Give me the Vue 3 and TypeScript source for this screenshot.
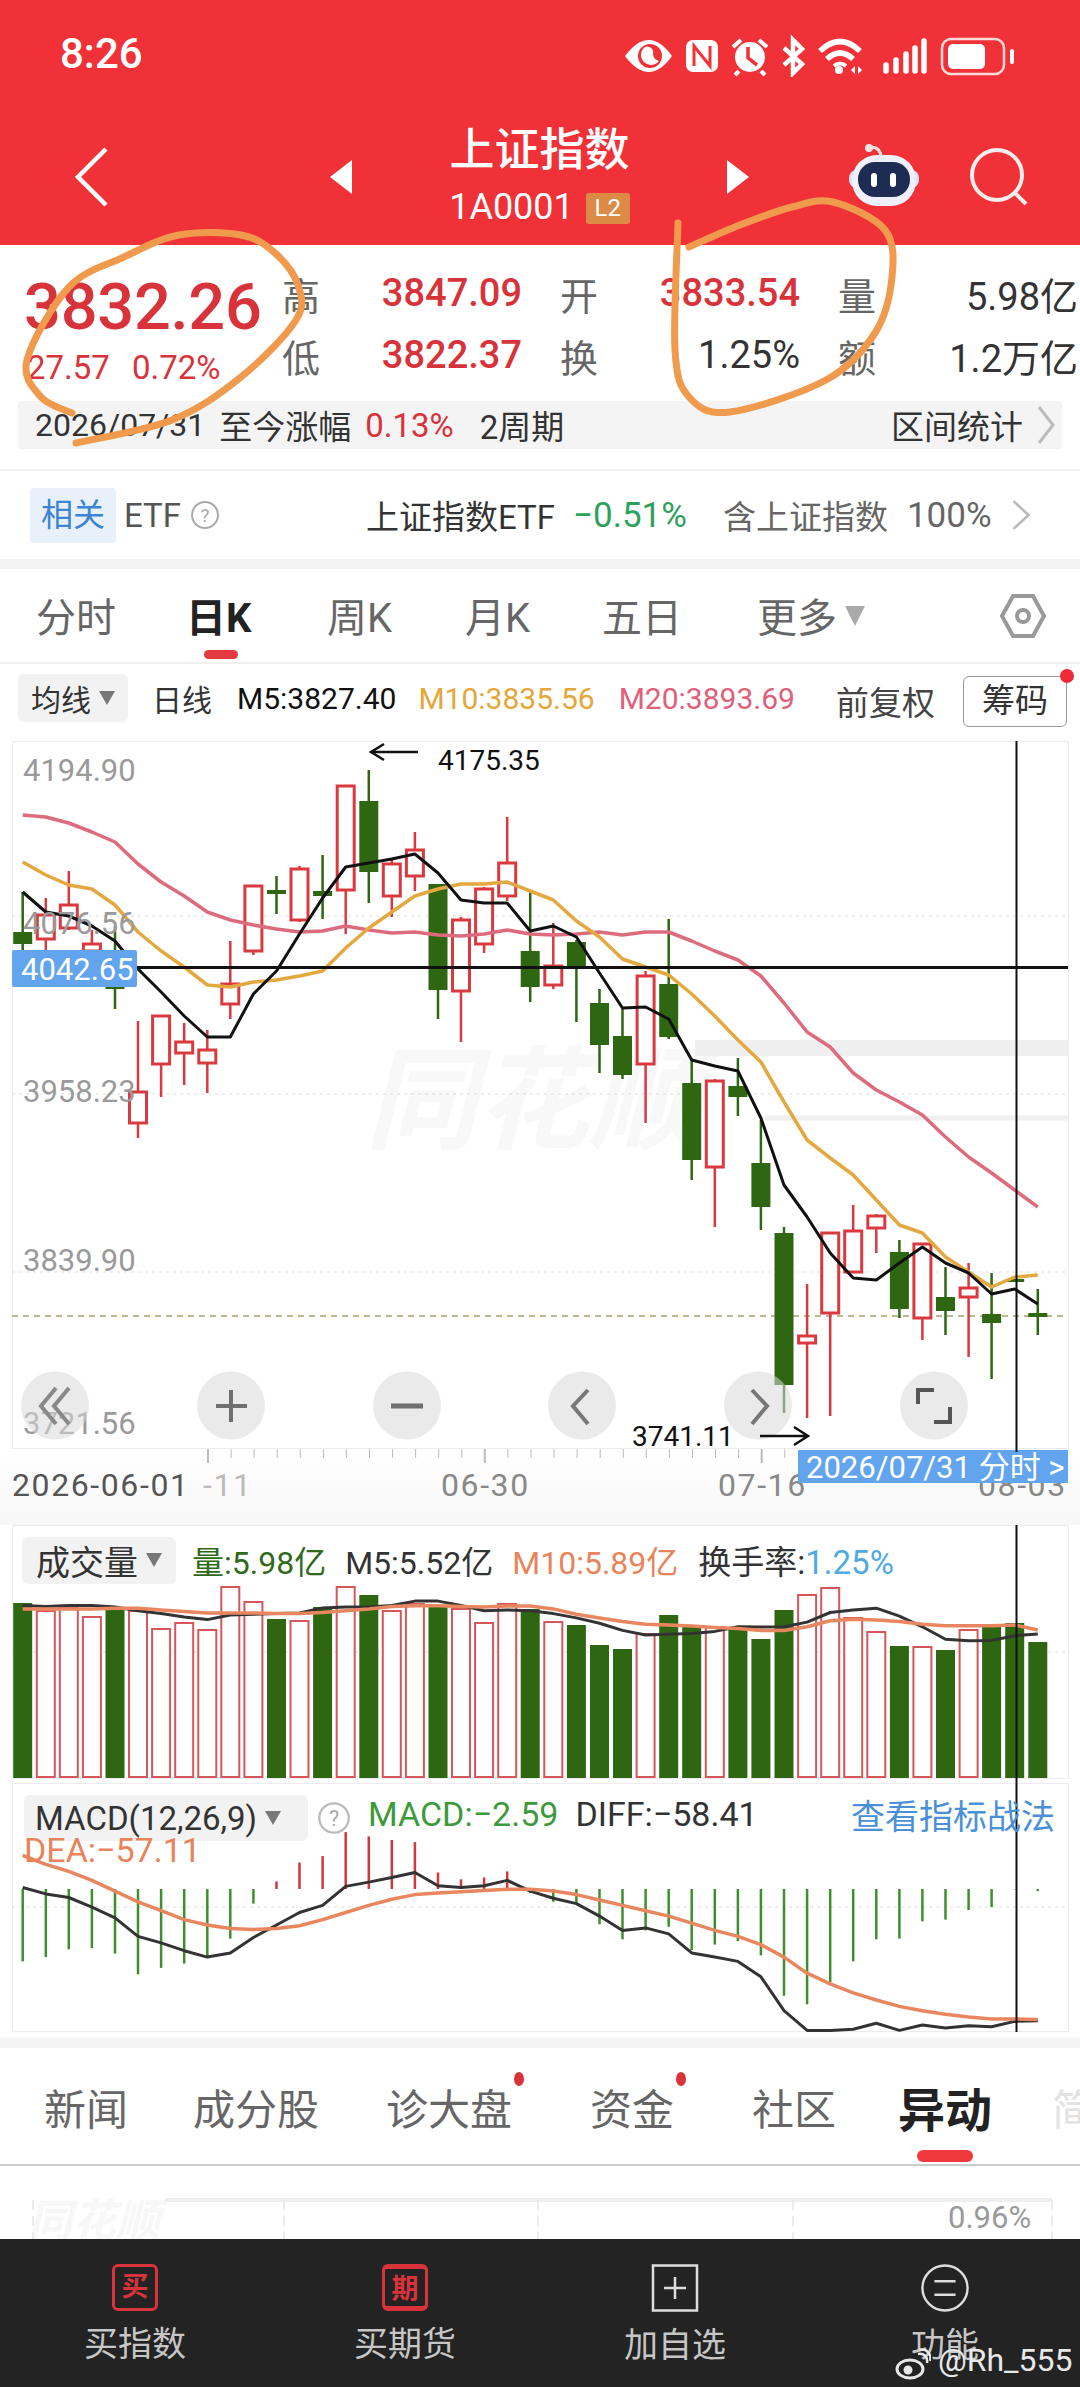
<template>
  <div class="page">
    <!-- 顶部红色区域 -->
    <header class="top">
      <div class="status">
        <span class="time">8:26</span>
        <svg class="status-icons" viewBox="625 30 395 45" fill="none" stroke="#fff" stroke-width="4">
          <path d="M625 54Q649 22 672 54Q649 86 625 54Z" fill="#fff" stroke="none" />
          <circle cx="650" cy="54" r="12" fill="#f03238" stroke="none" />
          <path d="M645 45A10 10 0 1 0 659 59A8 8 0 0 1 653 52A6 6 0 0 0 645 45Z" fill="#fff" stroke="none" />
          <rect x="686" y="38" width="32" height="32" rx="7" fill="#fff" stroke="none" />
          <path d="M694 64V44L710 64V44" stroke="#f03238" stroke-width="3" />
          <circle cx="750" cy="55" r="15" fill="#fff" stroke="none" />
          <path d="M748 45V56L757 63" stroke="#f03238" stroke-width="3.5" />
          <path d="M733 45L741 38M767 45L759 38M739 69L735 73M761 69L765 73" />
          <path d="M784 46L802 62L793 71V38L802 47L784 63" stroke-width="4.5" />
          <path d="M820 49Q840 30 860 49M827 57Q840 45 853 57" stroke-width="5.5" />
          <path d="M834 64Q840 59 846 64" stroke-width="4" />
          <circle cx="839" cy="68" r="4" fill="#fff" stroke="none" />
          <path d="M851 68L855 64V72ZM858 64L862 68L858 72Z" fill="#fff" stroke="none" />
          <path d="M886 69V63M896 69V58M906 69V52M915 69V46M924 69V39" stroke-width="5.5" stroke-linecap="round" />
          <rect x="942" y="37" width="62" height="35" rx="9" stroke="#fbd9d9" stroke-width="2.5" />
          <rect x="948" y="42" width="37" height="25" rx="5" fill="#fff" stroke="none" />
          <path d="M1012 49V60" stroke-width="4" stroke-linecap="round" />
        </svg>
      </div>
      <nav class="nav">
        <svg class="back" viewBox="0 0 34 60" fill="none" stroke="#fff" stroke-width="4.5">
          <path d="M32 2L4 30L32 58" />
        </svg>
        <svg class="arrow arrow-left" viewBox="0 0 22 34"><path d="M22 0V34L0 17Z" fill="#fff" /></svg>
        <div class="title">
          <div class="title-name">上证指数</div>
          <div class="title-code">1A0001<span class="badge">L2</span></div>
        </div>
        <svg class="arrow" viewBox="0 0 22 34"><path d="M0 0V34L22 17Z" fill="#fff" /></svg>
        <svg class="robot" viewBox="0 0 70 62">
          <path d="M20 4C26 2 31 5 32 12" fill="none" stroke="#fbe3e3" stroke-width="3" />
          <circle cx="20" cy="4" r="4" fill="#fbe3e3" />
          <rect x="0" y="26" width="70" height="18" rx="8" fill="#dfe2f7" />
          <rect x="3" y="11" width="64" height="51" rx="25" fill="#eef0fb" />
          <rect x="9" y="18" width="52" height="35" rx="17" fill="#1e2b52" />
          <rect x="22" y="29" width="6" height="14" rx="3" fill="#fff" />
          <rect x="41" y="29" width="6" height="14" rx="3" fill="#fff" />
        </svg>
        <svg class="search" viewBox="0 0 58 58" fill="none" stroke="#fdeeee" stroke-width="4">
          <circle cx="27" cy="27" r="25" />
          <path d="M44 44L56 56" />
        </svg>
      </nav>
    </header>

    <!-- 行情 -->
    <section class="quote">
      <div class="quote-main">
        <div class="quote-left">
          <div class="price">3832.26</div>
          <div class="change"><span>27.57</span><span>0.72%</span></div>
        </div>
        <div class="quote-grid">
          <div v-for="q in quoteCells" :key="q.label" class="cell">
            <span class="cell-label">{{ q.label }}</span>
            <span :class="['cell-value', { up: q.up }]">{{ q.value }}</span>
          </div>
        </div>
      </div>
      <div class="period">
        <span class="period-date">2026/07/31</span>
        <span>至今涨幅</span>
        <span class="up">0.13%</span>
        <span class="period-count">2周期</span>
        <span class="period-stat">区间统计</span>
        <svg class="chev" viewBox="0 0 18 40" fill="none" stroke="#bbb" stroke-width="3"><path d="M2 2L16 20L2 38" /></svg>
      </div>
    </section>

    <section class="etf">
      <span class="etf-tag">相关</span>
      <span class="etf-name">ETF</span>
      <svg class="help" viewBox="0 0 30 30"><circle cx="15" cy="15" r="13" fill="none" stroke="#aaa" stroke-width="2" /><text x="15" y="22" text-anchor="middle" class="help-text">?</text></svg>
      <span class="etf-fund">上证指数ETF</span>
      <span class="etf-pct">−0.51%</span>
      <span class="etf-hold">含上证指数</span>
      <span class="etf-weight">100%</span>
      <svg class="chev etf-chev" viewBox="0 0 18 30" fill="none" stroke="#bbb" stroke-width="2.5"><path d="M2 2L16 15L2 28" /></svg>
    </section>
    <div class="band"></div>

    <section class="tabs">
      <span class="tab">分时</span>
      <span class="tab tab-on">日K</span>
      <span class="tab">周K</span>
      <span class="tab">月K</span>
      <span class="tab">五日</span>
      <span class="tab">更多<i class="tri tri-more"></i></span>
      <svg class="gear" viewBox="0 0 46 44" fill="none" stroke="#999" stroke-width="4">
        <path d="M13 2H33L44 22L33 42H13L2 22Z" />
        <circle cx="23" cy="22" r="6" />
      </svg>
    </section>

    <section class="ma">
      <span class="chip chip-ma">均线<i class="tri"></i></span>
      <span class="ma-day">日线</span>
      <span class="ma-5">M5:3827.40</span>
      <span class="ma-10">M10:3835.56</span>
      <span class="ma-20">M20:3893.69</span>
      <span class="ma-adj">前复权</span>
      <span class="chips-btn">筹码</span>
    </section>

    <!-- K线 -->
    <svg class="chart" viewBox="0 741 1080 708">
      <rect x="12.5" y="741.5" width="1056" height="707" fill="#fff" stroke="#ececec" />
      <text x="365" y="1140" class="mark">同花顺</text>
      <path d="M695 1048H1068" stroke="#efefef" stroke-width="16" />
      <path d="M765 1118H1068" stroke="#f0f0f0" stroke-width="5" />
      <path v-for="g in [916, 1094, 1272]" :key="g" :d="`M12 ${g}H1068`" stroke="#ddd" stroke-dasharray="3 4" />
      <path d="M12 1316H1068" stroke="#a5a26a" stroke-width="1.5" stroke-dasharray="6 5" />

      <g v-for="(c, i) in candles" :key="i">
        <template v-if="c[0] === 'r'">
          <path :d="`M${xAt(i)} ${c[1]}V${c[2]}M${xAt(i)} ${c[3]}V${c[4]}`" stroke="#d93a40" stroke-width="2.5" />
          <rect :x="xAt(i) - 8.5" :y="c[2]" width="17" :height="c[3] - c[2]" fill="#fff" stroke="#d93a40" stroke-width="3" />
        </template>
        <template v-else>
          <path :d="`M${xAt(i)} ${c[1]}V${c[4]}`" stroke="#2e6612" stroke-width="2.5" />
          <rect :x="xAt(i) - 9.5" :y="c[2]" width="19" :height="c[3] - c[2]" fill="#2e6612" />
        </template>
      </g>

      <polyline :points="line(ma20)" class="ln" stroke="#dd6b7e" stroke-width="3.5" />
      <polyline :points="line(ma10)" class="ln" stroke="#e3a83f" stroke-width="3.5" />
      <polyline :points="line(ma5)" class="ln" stroke="#111" stroke-width="3" />
      <text v-for="l in priceLabels" :key="l.t" x="23" :y="l.y" class="axis-price">{{ l.t }}</text>

      <path d="M137 967.5H1068" stroke="#111" stroke-width="3" />
      <rect x="12" y="950" width="125" height="37" rx="2" fill="#62a5ee" />
      <text x="21" y="980" class="axis-cross">4042.65</text>
      <path d="M1016.5 741V1449" stroke="#111" stroke-width="2" />

      <path d="M418 752H372M384 744L371 752L384 760" fill="none" stroke="#111" stroke-width="2.5" />
      <text x="438" y="770" class="note">4175.35</text>

      <g v-for="b in ctrlX" :key="b">
        <circle :cx="b" cy="1405.5" r="34" fill="#d8d8d8" fill-opacity="0.55" />
      </g>
      <g fill="none" stroke="#6f6f6f" stroke-width="4">
        <path d="M56 1388L41 1406L56 1424M69 1388L54 1406L69 1424" stroke="#888" />
        <path d="M231 1390V1422M216 1406H247" />
        <path d="M391 1406H423" stroke-width="5" />
        <path d="M588 1390L573 1406L588 1424" stroke="#777" />
        <path d="M752 1390L767 1406L752 1424" stroke="#777" />
        <path d="M918 1404V1390H934M950 1407V1422H934" stroke="#555" />
      </g>
      <text x="632" y="1446" class="note">3741.11</text>
      <path d="M760 1436H806M794 1427L808 1436L794 1445" fill="none" stroke="#111" stroke-width="2.5" />
    </svg>

    <svg class="axis" viewBox="0 1449 1080 76">
      <rect x="0" y="1449" width="1080" height="76" fill="url(#fade)" />
      <defs>
        <linearGradient id="fade" x1="0" y1="0" x2="0" y2="1">
          <stop offset="0" stop-color="#fff" />
          <stop offset="1" stop-color="#f7f7f7" />
        </linearGradient>
      </defs>
      <path v-for="(t, i) in ticks" :key="i" :d="`M${t.x} 1449V${t.major ? 1463 : 1458}`" stroke="#bbb" :stroke-width="t.major ? 2 : 1" />
      <text x="12" y="1496" class="date">2026-06-01</text>
      <text x="203" y="1496" class="date date-dim">-11</text>
      <text x="441" y="1496" class="date date-mid">06-30</text>
      <text x="718" y="1496" class="date date-mid">07-16</text>
      <text x="978" y="1496" class="date date-mid">08-03</text>
      <rect x="798" y="1450" width="270" height="33" fill="#62a5ee" />
      <text x="806" y="1478" class="tag">2026/07/31 分时 &gt;</text>
      <path d="M1016.5 1449V1452" stroke="#111" stroke-width="2" />
    </svg>

    <!-- 成交量 -->
    <section class="panel vol">
      <div class="panel-head">
        <span class="chip chip-vol">成交量<i class="tri"></i></span>
        <span class="v-amt">量:5.98亿</span>
        <span class="v-m5">M5:5.52亿</span>
        <span class="v-m10">M10:5.89亿</span>
        <span class="v-rate">换手率:<b>1.25%</b></span>
      </div>
      <svg class="panel-svg" viewBox="0 1525 1080 258">
        <rect x="12.5" y="1525.5" width="1056" height="253" fill="none" stroke="#ececec" />
        <path d="M12 1652H1068" stroke="#ddd" stroke-dasharray="3 4" />
        <template v-for="(h, i) in volTops" :key="i">
          <rect v-if="candles[i][0] === 'r'" :x="xAt(i) - 9" :y="h" width="18" :height="1777 - h" fill="#fff" stroke="#d5565b" stroke-width="2" />
          <rect v-else :x="xAt(i) - 9.5" :y="h" width="19" :height="1778 - h" fill="#2e6612" />
        </template>
        <polyline :points="line(volM5)" class="ln" stroke="#333" stroke-width="3" />
        <polyline :points="line(volM10)" class="ln" stroke="#e8875f" stroke-width="3.5" />
        <path d="M1016.5 1525V1783" stroke="#111" stroke-width="2" />
      </svg>
    </section>

    <!-- MACD -->
    <section class="panel macd">
      <div class="panel-head macd-head">
        <span class="chip chip-macd">MACD(12,26,9)<i class="tri"></i></span>
        <svg class="help help-macd" viewBox="0 0 30 30"><circle cx="15" cy="15" r="13" fill="none" stroke="#bbb" stroke-width="2" /><text x="15" y="22" text-anchor="middle" class="help-text">?</text></svg>
        <span class="m-macd">MACD:−2.59</span>
        <span class="m-diff">DIFF:−58.41</span>
        <span class="m-link">查看指标战法</span>
      </div>
      <div class="m-dea">DEA:−57.11</div>
      <svg class="panel-svg" viewBox="0 1783 1080 255">
        <rect x="12.5" y="1783.5" width="1056" height="248" fill="none" stroke="#ececec" />
        <path d="M12 1907H1068" stroke="#ddd" stroke-dasharray="3 4" />
        <path v-for="(b, i) in macdBars" :key="i" :d="`M${xAt(i)} 1889V${b}`" :stroke="b < 1889 ? '#d0383c' : '#3e8f2c'" stroke-width="2.5" />
        <polyline :points="line(macdDiff)" class="ln" stroke="#333" stroke-width="3" />
        <polyline :points="line(macdDea)" class="ln" stroke="#e8875f" stroke-width="3.5" />
        <path d="M1016.5 1783V2032" stroke="#111" stroke-width="2" />
      </svg>
    </section>
    <div class="band"></div>

    <section class="subtabs">
      <span>新闻</span>
      <span>成分股</span>
      <span class="dot">诊大盘</span>
      <span class="dot">资金</span>
      <span>社区</span>
      <span class="sub-on">异动</span>
      <span class="sub-fade">简</span>
    </section>

    <section class="preview">
      <svg viewBox="0 2166 1080 73" class="preview-svg">
        <text x="28" y="2236" class="preview-mark">同花顺</text>
        <path d="M165 2200H1052" stroke="#eee" stroke-width="4" />
        <path v-for="v in [33, 284, 538, 793, 1052]" :key="v" :d="`M${v} 2200V2239`" stroke="#e6e6e6" stroke-dasharray="10 6" stroke-width="1.5" />
        <text x="948" y="2228" class="preview-text">0.96%</text>
      </svg>
    </section>

    <footer class="bar">
      <div class="bar-item">
        <span class="box">买</span>
        <span class="bar-label">买指数</span>
      </div>
      <div class="bar-item">
        <span class="box box-fill">期</span>
        <span class="bar-label">买期货</span>
      </div>
      <div class="bar-item">
        <svg class="bar-icon" viewBox="0 0 48 48" fill="none" stroke="#ddd" stroke-width="2.5">
          <rect x="2" y="1.5" width="44" height="45" />
          <path d="M24 13V35M13 24H35" />
        </svg>
        <span class="bar-label">加自选</span>
      </div>
      <div class="bar-item">
        <svg class="bar-icon" viewBox="0 0 50 50" fill="none" stroke="#ddd" stroke-width="2.5">
          <circle cx="25" cy="25" r="23.5" />
          <path d="M14 18H36M14 32H36" />
        </svg>
        <span class="bar-label">功能</span>
      </div>
    </footer>

    <!-- 手绘圈注和水印 -->
    <svg class="ink" viewBox="0 0 1080 2387" fill="none" stroke="#f09a4d" stroke-width="7" stroke-linecap="round" stroke-linejoin="round">
      <path :d="smooth(inkLeft)" />
      <path :d="smooth(inkRight)" />
    </svg>
    <div class="weibo">
      <svg class="weibo-logo" viewBox="0 0 36 32" fill="none" stroke="#e8e8e8" stroke-width="3">
        <ellipse cx="15" cy="21" rx="13" ry="9" />
        <circle cx="13" cy="22" r="3" fill="#e8e8e8" />
        <path d="M23 6C29 5 33 9 32 15M24 2C32 0 37 7 35 13" stroke-width="2.5" />
      </svg>
      <span>@Rh_555</span>
    </div>
  </div>
</template>

<script setup lang="ts">
type Candle = ['r' | 'g', number, number, number, number]

const quoteCells = [
  { label: '高', value: '3847.09', up: true },
  { label: '开', value: '3833.54', up: true },
  { label: '量', value: '5.98亿', up: false },
  { label: '低', value: '3822.37', up: true },
  { label: '换', value: '1.25%', up: false },
  { label: '额', value: '1.2万亿', up: false }
]

const priceLabels = [
  { t: '4194.90', y: 781 },
  { t: '4076.56', y: 934 },
  { t: '3958.23', y: 1102 },
  { t: '3839.90', y: 1271 },
  { t: '3721.56', y: 1434 }
]

const xAt = (i: number) => +(22.7 + 23.07 * i).toFixed(1)
const line = (ys: number[]) => ys.map((y, i) => `${xAt(i)},${y}`).join(' ')
// 取自副图的刻度: 像素值 = 顶部 + z / 2.8
const fromZ = (zs: number[]) => zs.map((z) => +(1500 + z / 2.8).toFixed(1))

// 颜色, 上影, 实体顶, 实体底, 下影
const candles: Candle[] = [
  ['g', 892, 932, 944, 962], ['r', 898, 915, 939, 950], ['r', 871, 905, 928, 930],
  ['r', 930, 944, 951, 964], ['g', 926, 950, 989, 1009], ['r', 1021, 1092, 1123, 1138],
  ['r', 1016, 1016, 1064, 1097], ['r', 1023, 1042, 1053, 1085], ['r', 1030, 1050, 1063, 1093],
  ['r', 941, 984, 1004, 1019], ['r', 885, 886, 951, 955], ['g', 876, 890, 894, 914],
  ['r', 866, 869, 920, 922], ['g', 855, 891, 896, 919], ['r', 785, 786, 890, 934],
  ['g', 770, 801, 872, 903], ['r', 859, 864, 896, 917], ['r', 832, 850, 876, 891],
  ['g', 884, 884, 990, 1019], ['r', 917, 920, 991, 1042], ['r', 887, 889, 944, 953],
  ['r', 817, 863, 896, 901], ['g', 891, 951, 987, 1002], ['r', 923, 966, 985, 989],
  ['g', 940, 942, 969, 1022], ['g', 989, 1003, 1045, 1073], ['g', 1009, 1036, 1075, 1079],
  ['r', 971, 976, 1064, 1123], ['g', 919, 984, 1037, 1039], ['g', 1060, 1083, 1160, 1180],
  ['r', 1079, 1081, 1167, 1227], ['g', 1058, 1086, 1097, 1116], ['g', 1120, 1163, 1207, 1230],
  ['g', 1227, 1233, 1385, 1413], ['r', 1284, 1336, 1343, 1418], ['r', 1232, 1233, 1313, 1416],
  ['r', 1205, 1231, 1272, 1273], ['r', 1214, 1216, 1228, 1253], ['g', 1240, 1252, 1309, 1318],
  ['r', 1243, 1244, 1318, 1340], ['g', 1267, 1297, 1311, 1335], ['r', 1263, 1288, 1297, 1357],
  ['g', 1273, 1314, 1323, 1379], ['g', 1279, 1279, 1282, 1282], ['g', 1289, 1313, 1317, 1335]
]

const ma5 = [892, 912, 916, 926, 941, 969, 992, 1016, 1037, 1037, 994, 971, 934, 898, 867, 863, 859, 854, 873, 900, 903, 903, 931, 926, 937, 973, 1008, 1007, 1019, 1060, 1066, 1071, 1118, 1185, 1217, 1253, 1278, 1280, 1263, 1247, 1263, 1273, 1294, 1289, 1304]
const ma10 = [862, 875, 885, 889, 905, 932, 951, 967, 985, 987, 982, 980, 976, 971, 948, 928, 912, 896, 889, 884, 884, 882, 891, 900, 921, 937, 959, 967, 975, 994, 1016, 1040, 1062, 1102, 1140, 1158, 1175, 1200, 1225, 1233, 1257, 1272, 1287, 1277, 1275]
const ma20 = [815, 817, 823, 832, 842, 864, 882, 896, 912, 920, 925, 929, 932, 931, 926, 930, 933, 932, 935, 936, 934, 930, 934, 935, 934, 932, 935, 932, 932, 941, 951, 960, 976, 1003, 1032, 1047, 1073, 1090, 1102, 1115, 1137, 1157, 1173, 1190, 1207]

const volTops = [1603, 1611, 1607, 1617, 1609, 1611, 1629, 1623, 1630, 1587, 1602, 1619, 1621, 1607, 1587, 1595, 1611, 1604, 1607, 1609, 1623, 1604, 1609, 1622, 1625, 1645, 1649, 1634, 1615, 1627, 1627, 1629, 1639, 1610, 1595, 1588, 1618, 1632, 1646, 1647, 1650, 1630, 1627, 1623, 1642]
const volM5 = fromZ([295, 298, 295, 295, 300, 310, 318, 328, 335, 322, 320, 318, 316, 302, 300, 300, 295, 283, 283, 295, 310, 308, 310, 318, 330, 345, 365, 378, 376, 374, 368, 355, 356, 355, 342, 315, 308, 303, 325, 355, 390, 394, 393, 380, 375])
const volM10 = fromZ([305, 305, 305, 305, 303, 303, 308, 312, 316, 316, 316, 318, 318, 315, 310, 305, 298, 296, 296, 298, 300, 297, 297, 305, 320, 330, 340, 348, 350, 353, 357, 360, 365, 365, 355, 338, 334, 336, 340, 348, 352, 352, 352, 350, 364])

const macdBars = fromZ([1292, 1280, 1258, 1255, 1270, 1328, 1310, 1298, 1280, 1228, 1130, 1068, 1015, 997, 930, 942, 952, 958, 1043, 1062, 1057, 1040, 1100, 1125, 1130, 1188, 1230, 1205, 1195, 1260, 1245, 1235, 1275, 1388, 1412, 1350, 1292, 1230, 1228, 1180, 1175, 1148, 1140, 1090, 1095])
const macdDiff = fromZ([1085, 1103, 1113, 1140, 1170, 1222, 1240, 1262, 1280, 1268, 1225, 1190, 1155, 1135, 1082, 1070, 1057, 1043, 1080, 1085, 1080, 1065, 1095, 1115, 1130, 1165, 1205, 1198, 1215, 1268, 1280, 1292, 1335, 1430, 1485, 1485, 1482, 1465, 1485, 1470, 1478, 1472, 1475, 1460, 1458])
const macdDea = fromZ([995, 1020, 1040, 1065, 1095, 1125, 1150, 1175, 1190, 1200, 1203, 1200, 1192, 1175, 1155, 1135, 1118, 1105, 1100, 1097, 1093, 1090, 1090, 1095, 1105, 1120, 1135, 1150, 1165, 1185, 1205, 1222, 1245, 1280, 1325, 1355, 1380, 1400, 1418, 1430, 1440, 1448, 1453, 1453, 1455])

const ctrlX = [55, 231, 407, 582, 758, 934]
const ticks = Array.from({ length: 26 }, (_, i) => {
  const x = 208 + 23.07 * i
  return { x: +x.toFixed(1), major: i === 0 || i === 12 || i === 24 }
})

const inkLeft: [number, number][] = [[76, 443], [172, 420], [241, 377], [296, 320], [298, 285], [275, 253], [241, 235], [179, 235], [124, 257], [69, 287], [27, 360], [41, 397], [72, 413]]
const inkRight: [number, number][] = [[689, 247], [740, 225], [792, 207], [833, 202], [885, 230], [892, 277], [875, 333], [826, 380], [730, 412], [689, 397], [675, 350], [678, 223]]

// Catmull-Rom 转贝塞尔
const smooth = (p: [number, number][]) => {
  let d = `M${p[0][0]} ${p[0][1]}`
  for (let i = 0; i < p.length - 1; i++) {
    const a = p[Math.max(i - 1, 0)]
    const b = p[i]
    const c = p[i + 1]
    const e = p[Math.min(i + 2, p.length - 1)]
    d += `C${b[0] + (c[0] - a[0]) / 6} ${b[1] + (c[1] - a[1]) / 6} ${c[0] - (e[0] - b[0]) / 6} ${c[1] - (e[1] - b[1]) / 6} ${c[0]} ${c[1]}`
  }
  return d
}
</script>

<style>
html,
body {
  margin: 0;
  background: #fff;
}
</style>

<style scoped>
.page {
  position: relative;
  width: 1080px;
  height: 2387px;
  overflow: hidden;
  display: flex;
  flex-direction: column;
  background: #fff;
  color: #333;
  font-family: Roboto, "Noto Sans CJK SC", sans-serif;
}
svg {
  display: block;
  flex: none;
}
i {
  font-style: normal;
}
.top {
  height: 245px;
  flex: none;
  background: #f03238;
  color: #fff;
}
.status {
  height: 108px;
  display: flex;
  align-items: center;
  justify-content: space-between;
  padding: 0 60px 0 60px;
  box-sizing: border-box;
}
.time {
  font-size: 42px;
  font-weight: 500;
  margin-top: -1px;
}
.status-icons {
  width: 395px;
  height: 45px;
}
.nav {
  height: 137px;
  display: flex;
  align-items: center;
  padding-left: 74px;
}
.back {
  width: 34px;
  height: 60px;
}
.arrow {
  width: 22px;
  height: 34px;
}
.arrow-left {
  margin-left: 222px;
}
.title {
  width: 375px;
  text-align: center;
  margin-top: -4px;
}
.title-name {
  font-size: 45px;
  line-height: 58px;
  font-weight: 500;
}
.title-code {
  font-size: 36px;
  line-height: 40px;
  margin-top: 7px;
}
.badge {
  display: inline-block;
  margin-left: 12px;
  width: 44px;
  height: 31px;
  line-height: 31px;
  font-size: 24px;
  background: #dc8b46;
  border-radius: 3px;
  vertical-align: 3px;
}
.robot {
  width: 70px;
  height: 62px;
  margin-left: 100px;
  margin-top: -4px;
}
.search {
  width: 58px;
  height: 58px;
  margin-left: 51px;
}
.quote {
  height: 226px;
  flex: none;
  box-sizing: border-box;
  border-bottom: 2px solid #f0f0f0;
}
.quote-main {
  display: flex;
  height: 156px;
  padding-left: 27px;
}
.quote-left {
  width: 255px;
}
.price {
  font-size: 65px;
  font-weight: 500;
  line-height: 66px;
  margin: 29px 0 0 -3px;
  color: #d8333a;
  letter-spacing: -0.3px;
}
.change {
  display: flex;
  gap: 22px;
  font-size: 33px;
  line-height: 40px;
  margin-top: 8px;
  color: #d8333a;
}
.quote-grid {
  display: grid;
  grid-template-columns: repeat(3, 240px);
  grid-auto-rows: 62px;
  column-gap: 38px;
  padding-top: 17px;
}
.cell {
  display: flex;
  align-items: center;
  justify-content: space-between;
}
.cell-label {
  font-size: 38px;
  color: #666;
}
.cell-value {
  font-size: 38px;
  color: #333;
}
.up {
  color: #d8333a;
}
.cell-value.up {
  font-weight: 500;
}
.period {
  margin: 0 18px;
  height: 48px;
  display: flex;
  align-items: center;
  gap: 14px;
  padding-left: 17px;
  background: #f4f4f4;
  border-radius: 4px;
  font-size: 33px;
  color: #333;
}
.period-date {
  font-size: 32px;
}
.period-count {
  margin-left: 12px;
}
.period-stat {
  margin-left: auto;
}
.period .chev {
  width: 18px;
  height: 40px;
  margin-right: 7px;
}
.etf {
  height: 88px;
  flex: none;
  box-sizing: border-box;
  display: flex;
  align-items: center;
  padding-left: 30px;
  font-size: 34px;
}
.etf-tag {
  width: 86px;
  height: 55px;
  line-height: 55px;
  text-align: center;
  background: #e8f1fb;
  border-radius: 4px;
  color: #3d84d6;
  font-size: 32px;
}
.etf-name {
  margin-left: 8px;
  color: #555;
  font-size: 33px;
}
.help {
  width: 30px;
  height: 30px;
  margin-left: 9px;
}
.help-text {
  font-size: 19px;
  fill: #aaa;
}
.etf-fund {
  margin-left: 146px;
  font-size: 33px;
  color: #333;
}
.etf-pct {
  margin-left: 18px;
  color: #2ea15c;
  font-size: 35px;
}
.etf-hold {
  margin-left: 36px;
  color: #666;
  font-size: 33px;
}
.etf-weight {
  margin-left: 19px;
  color: #666;
  font-size: 35px;
}
.etf-chev {
  width: 20px;
  height: 32px;
  margin-left: 19px;
}
.band {
  height: 10px;
  flex: none;
  background: #f4f4f4;
}
.tabs {
  position: relative;
  height: 95px;
  flex: none;
  box-sizing: border-box;
  display: grid;
  grid-template-columns: 150px 141px 138px 137px 155px 243px 1fr;
  align-items: center;
  padding-left: 36px;
  border-bottom: 2px solid #efefef;
  font-size: 40px;
  color: #666;
}
.tab {
  position: relative;
  margin-top: -1px;
}
.tab-on {
  font-weight: 700;
  color: #222;
}
.tab-on::after {
  content: "";
  position: absolute;
  left: 18px;
  top: 64px;
  width: 34px;
  height: 9px;
  border-radius: 5px;
  background: #e33a3f;
}
.tri {
  display: inline-block;
  width: 0;
  height: 0;
  margin-left: 8px;
  vertical-align: 4px;
  border-left: 8px solid transparent;
  border-right: 8px solid transparent;
  border-top: 14px solid #777;
}
.tri-more {
  border-left-width: 10px;
  border-right-width: 10px;
  border-top: 20px solid #aaa;
  vertical-align: 6px;
}
.gear {
  width: 46px;
  height: 44px;
}
.ma {
  position: relative;
  height: 77px;
  flex: none;
  display: flex;
  align-items: center;
  padding: 0 0 9px 18px;
  box-sizing: border-box;
  font-size: 30px;
}
.chip {
  display: inline-flex;
  align-items: center;
  justify-content: center;
  background: #f2f2f2;
  border-radius: 6px;
  color: #333;
}
.chip-ma {
  width: 110px;
  height: 48px;
}
.ma-day {
  margin-left: 24px;
  color: #333;
}
.ma-5 {
  margin-left: 25px;
  color: #111;
}
.ma-10 {
  margin-left: 22px;
  color: #e5a63a;
}
.ma-20 {
  margin-left: 24px;
  color: #e0607a;
}
.ma-adj {
  position: absolute;
  left: 836px;
  top: 13px;
  font-size: 33px;
  color: #444;
}
.chips-btn {
  position: absolute;
  left: 963px;
  top: 12px;
  width: 104px;
  height: 51px;
  box-sizing: border-box;
  border: 1.5px solid #999;
  border-radius: 6px;
  text-align: center;
  line-height: 48px;
  font-size: 33px;
  color: #333;
}
.chips-btn::after {
  content: "";
  position: absolute;
  right: -8px;
  top: -8px;
  width: 14px;
  height: 14px;
  border-radius: 50%;
  background: #ef2b36;
}
.chart {
  width: 1080px;
  height: 708px;
}
.ln {
  fill: none;
  stroke-linejoin: round;
}
.mark {
  font-size: 112px;
  font-weight: 700;
  font-style: italic;
  fill: #f8f8f8;
}
.axis-price {
  font-size: 31px;
  fill: #9a9a9a;
}
.axis-cross {
  font-size: 31px;
  fill: #fff;
}
.note {
  font-size: 28px;
  fill: #111;
}
.axis {
  width: 1080px;
  height: 76px;
}
.date {
  font-size: 32px;
  letter-spacing: 1.6px;
  fill: #555;
}
.date-dim {
  fill: #bbb;
}
.date-mid {
  fill: #888;
}
.tag {
  font-size: 31px;
  fill: #fff;
}
.panel {
  position: relative;
  flex: none;
}
.panel-svg {
  width: 1080px;
  height: 100%;
}
.panel-head {
  position: absolute;
  left: 24px;
  top: 11px;
  right: 25px;
  z-index: 1;
  display: flex;
  align-items: center;
  font-size: 32px;
}
.vol {
  height: 258px;
}
.chip-vol {
  width: 154px;
  height: 47px;
  margin-left: -2px;
  margin-right: 2px;
  font-size: 34px;
}
.v-amt {
  margin-left: 14px;
  color: #2e6a1a;
}
.v-m5 {
  margin-left: 19px;
  color: #333;
}
.v-m10 {
  margin-left: 19px;
  color: #e8835a;
}
.v-rate {
  margin-left: 20px;
  color: #333;
  font-size: 33px;
}
.v-rate b {
  font-weight: 400;
  color: #4eaae0;
}
.macd {
  height: 255px;
}
.chip-macd {
  width: 284px;
  height: 46px;
  font-size: 33px;
  justify-content: flex-start;
  padding-left: 11px;
  box-sizing: border-box;
}
.macd-head {
  top: 12px;
}
.help-macd {
  width: 34px;
  height: 34px;
  margin-left: 9px;
}
.m-macd {
  margin: -8px 0 0 17px;
  color: #3c9a3c;
  font-size: 34px;
}
.m-diff {
  margin: -8px 0 0 17px;
  color: #333;
  font-size: 34px;
}
.m-link {
  margin: -8px 0 0 auto;
  color: #4a90d9;
  font-size: 34px;
}
.m-dea {
  position: absolute;
  left: 24px;
  top: 47px;
  z-index: 1;
  font-size: 34px;
  color: #e8835a;
}
.subtabs {
  height: 118px;
  flex: none;
  box-sizing: border-box;
  display: grid;
  grid-template-columns: 149px 193px 204px 162px 146px 154px 1fr;
  align-items: center;
  padding-left: 44px;
  border-bottom: 2px solid #ccc;
  font-size: 42px;
  color: #666;
}
.subtabs span {
  position: relative;
  white-space: nowrap;
  justify-self: start;
}
.subtabs .dot::after {
  content: "";
  position: absolute;
  right: -12px;
  top: -4px;
  width: 10px;
  height: 14px;
  border-radius: 50%;
  background: #d8333a;
}
.subtabs .sub-on {
  font-size: 47px;
  font-weight: 700;
  color: #222;
}
.sub-on::after {
  content: "";
  position: absolute;
  left: 19px;
  top: 78px;
  width: 56px;
  height: 12px;
  border-radius: 6px;
  background: #f0393d;
}
.sub-fade {
  color: #e2e2e2;
}
.preview {
  height: 73px;
  flex: none;
}
.preview-svg {
  width: 1080px;
  height: 73px;
}
.preview-text {
  font-size: 31px;
  fill: #999;
}
.preview-mark {
  font-size: 44px;
  font-weight: 700;
  font-style: italic;
  fill: #f7f7f7;
}
.bar {
  height: 148px;
  flex: none;
  box-sizing: border-box;
  display: grid;
  grid-template-columns: repeat(4, 270px);
  background: #232323;
  padding-top: 25px;
}
.bar-item {
  display: flex;
  flex-direction: column;
  align-items: center;
}
.box {
  width: 46px;
  height: 47px;
  box-sizing: border-box;
  border: 3px solid #d8333a;
  border-radius: 6px;
  color: #d8333a;
  font-size: 27px;
  font-weight: 700;
  line-height: 40px;
  text-align: center;
}
.box-fill {
  border-top-width: 5px;
  border-bottom-width: 5px;
}
.bar-icon {
  width: 48px;
  height: 48px;
}
.bar-label {
  margin-top: 10px;
  font-size: 34px;
  line-height: 46px;
  color: #c6c6c6;
}
.ink {
  position: absolute;
  left: 0;
  top: 0;
  width: 1080px;
  height: 2387px;
  pointer-events: none;
}
.weibo {
  position: absolute;
  left: 895px;
  top: 2340px;
  display: flex;
  align-items: center;
  gap: 7px;
  font-size: 32px;
  color: #e8e8e8;
}
.weibo-logo {
  width: 36px;
  height: 32px;
  margin-top: 8px;
}
</style>
